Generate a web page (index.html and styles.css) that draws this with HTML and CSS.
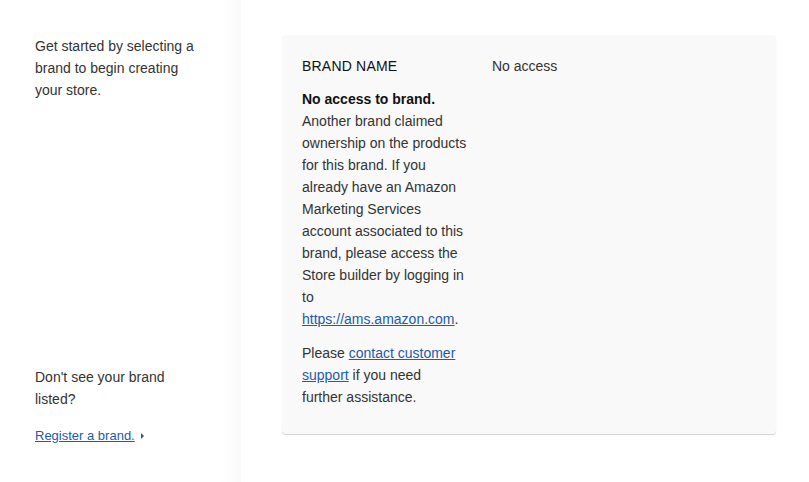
FILE: index.html
```html
<!DOCTYPE html>
<html lang="en">
<head>
    <meta charset="UTF-8">
    <meta name="viewport" content="width=device-width, initial-scale=1.0">
    <title>Store builder - Select brand</title>
    <link rel="stylesheet" href="styles.css">
</head>
<body>
    <div class="page">
        <aside class="sidebar">
            <p class="intro">Get started by selecting a brand to begin creating your store.</p>

            <div class="sidebar-bottom">
                <p class="missing">Don't see your brand listed?</p>
                <a href="#" class="register">Register a brand.</a><span class="caret"></span>
            </div>
        </aside>

        <main class="main">
            <div class="brand-card">
                <div class="brand-col">
                    <h3 class="brand-name">BRAND NAME</h3>
                    <p class="notice">
                        <strong>No access to brand.</strong><br>
                        Another brand claimed ownership on the products for this brand. If you already have an Amazon Marketing Services account associated to this brand, please access the Store builder by logging in to <a href="#">https://ams.amazon.com</a>.
                    </p>
                    <p class="notice">
                        Please <a href="#">contact customer support</a> if you need <span class="nowrap">further assistance.</span>
                    </p>
                </div>
                <div class="status">No access</div>
            </div>
        </main>
    </div>
</body>
</html>
```

FILE: styles.css
```css
body {
    margin: 0;
    font-family: "Liberation Sans", Arial, sans-serif;
    font-size: 14px;
    line-height: 22px;
    color: #333;
    background-color: #fff;
}

a {
    color: #235ba8;
    text-decoration: underline;
}

.nowrap {
    white-space: nowrap;
}

.page {
    display: flex;
    height: 100vh;
}

.sidebar {
    width: 171px;
    flex-shrink: 0;
    padding: 35px 35px 35px 35px;
    display: flex;
    flex-direction: column;
    justify-content: space-between;
    box-shadow: inset -26px 0 22px -22px rgba(0, 0, 0, 0.04);
}

.intro {
    margin: 0;
}

.missing {
    margin: 0 0 14px;
}

.register {
    font-size: 13px;
}

.caret {
    display: inline-block;
    margin-left: 6px;
    width: 0;
    height: 0;
    border-top: 3px solid transparent;
    border-bottom: 3px solid transparent;
    border-left: 3px solid #235ba8;
    vertical-align: 1px;
}

.main {
    flex: 1;
    padding: 35px 33px 0 41px;
}

.brand-card {
    display: flex;
    gap: 20px;
    padding: 20px 20px 26px;
    background-color: #f9f9f9;
    border-radius: 4px;
    box-shadow: 0 1px 1px rgba(0, 0, 0, 0.18);
}

.brand-col {
    width: 170px;
}

.brand-name {
    margin: 0 0 11px;
    font-size: 14px;
    font-weight: normal;
    color: #111;
    letter-spacing: 0.2px;
}

.notice {
    margin: 0 0 12px;
}

.notice:last-child {
    margin-bottom: 0;
}

.notice strong {
    color: #111;
}

.status {
    color: #333;
}
```
